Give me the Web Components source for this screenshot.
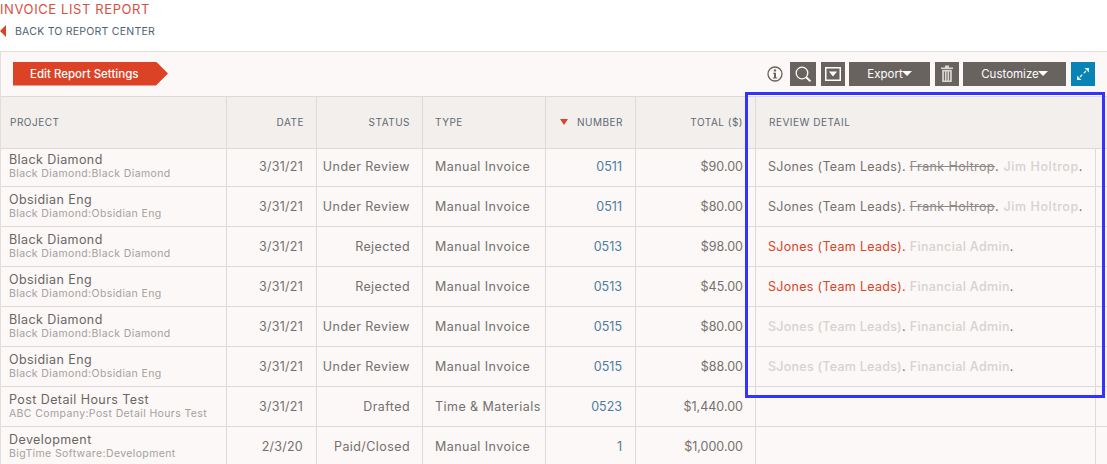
<!DOCTYPE html>
<html>
<head>
<meta charset="utf-8">
<title>Invoice List Report</title>
<style>
html,body{margin:0;padding:0;background:#fff;overflow:hidden;height:464px;}
body{font-family:"Inter","Liberation Sans",sans-serif;color:#6b6562;}
.grey{color:#d6d2d0;font-weight:500;letter-spacing:.35px}
</style>
</head>
<body>
<report-page>
  <report-heading title-text="Invoice List Report" back-text="Back to Report Center"></report-heading>
  <report-panel>
    <report-toolbar></report-toolbar>
    <report-row kind="head">
      <report-cell kind="head">PROJECT</report-cell>
      <report-cell kind="head" align="right">DATE</report-cell>
      <report-cell kind="head" align="right">STATUS</report-cell>
      <report-cell kind="head" style="padding-left:12px">TYPE</report-cell>
      <report-cell kind="head" align="right" sorted>NUMBER</report-cell>
      <report-cell kind="head" align="right">TOTAL ($)</report-cell>
      <report-cell kind="head" style="padding-left:13px">REVIEW DETAIL</report-cell>
    </report-row>
    <div id="rows"></div>
  </report-panel>
  <review-highlight></review-highlight>
</report-page>

<script>
const pageTemplate = document.createElement("template");
pageTemplate.innerHTML = `<style>
:host{display:block;position:relative;width:1107px;height:464px;overflow:hidden;}
</style><slot></slot>`;
class ReportPage extends HTMLElement {
  constructor() {
    super();
    this.attachShadow({ mode: "open" }).appendChild(pageTemplate.content.cloneNode(true));
  }
}
customElements.define("report-page", ReportPage);

const headingTemplate = document.createElement("template");
headingTemplate.innerHTML = `<style>
:host{display:block;height:51px;box-sizing:border-box;padding-top:1px;}
h1{margin:0;font-size:13px;line-height:16px;font-weight:400;letter-spacing:.6px;color:#d9503f;text-transform:uppercase;}
a{display:flex;align-items:center;margin-top:6px;height:16px;font-size:10.5px;letter-spacing:.24px;color:#4f6273;text-transform:uppercase;}
i{width:0;height:0;border-style:solid;border-width:6px 6px 6px 0;border-color:transparent #dc4326 transparent transparent;margin-right:9px;}
</style><h1></h1><a><i></i><span></span></a>`;
class ReportHeading extends HTMLElement {
  constructor() {
    super();
    this.$root = this.attachShadow({ mode: "open" });
    this.$root.appendChild(headingTemplate.content.cloneNode(true));
  }
  connectedCallback() {
    this.$root.querySelector("h1").textContent = this.getAttribute("title-text");
    this.$root.querySelector("span").textContent = this.getAttribute("back-text");
  }
}
customElements.define("report-heading", ReportHeading);

const panelTemplate = document.createElement("template");
panelTemplate.innerHTML = `<style>
:host{display:block;background:#fbf8f7;border-top:1px solid #e2dedc;border-left:1px solid #e2dedc;width:1107px;box-sizing:border-box;
  --cols:226px 90px 106px 123px 90px 120px 340px 11px;}
</style><slot></slot>`;
class ReportPanel extends HTMLElement {
  constructor() {
    super();
    this.attachShadow({ mode: "open" }).appendChild(panelTemplate.content.cloneNode(true));
  }
}
customElements.define("report-panel", ReportPanel);

const toolbarTemplate = document.createElement("template");
toolbarTemplate.innerHTML = `<style>
:host{display:flex;align-items:center;height:44px;box-sizing:border-box;padding:0 12px;}
.edit{display:flex;align-items:center;height:24px;width:155px;box-sizing:border-box;padding-left:17px;background:#dc4326;color:#fff;
  font-size:11.5px;font-weight:500;clip-path:polygon(0 0,143px 0,155px 50%,143px 100%,0 100%);margin-top:-1px;}
.tools{margin-left:auto;display:flex;align-items:center;margin-top:-1px;}
.btn{display:flex;align-items:center;justify-content:center;height:24px;box-sizing:border-box;background:#696360;color:#fff;font-size:11.5px;margin-left:5px;}
.btn svg{display:block;}
.info{display:block;}
.caret{width:0;height:0;border-style:solid;border-width:5px 5px 0 5px;border-color:#fff transparent transparent transparent;margin-left:-1px;}
.blue{background:#0783b5;}
</style>
<div class="edit">Edit Report Settings</div>
<div class="tools">
  <svg class="info" width="16" height="16" viewBox="0 0 16 16"><circle cx="8" cy="8" r="7" fill="none" stroke="#696360" stroke-width="1.3"/><circle cx="8" cy="4.4" r="1.2" fill="#696360"/><path d="M6 6.8h3v4.8h1.2v1H5.8v-1H7V7.8H6z" fill="#696360"/></svg>
  <div class="btn" style="width:26px;margin-left:7px"><svg width="18" height="18" viewBox="0 0 18 18"><circle cx="8" cy="8" r="5.8" fill="none" stroke="#fff" stroke-width="1.3"/><path d="M12 12l4.4 4.4" stroke="#fff" stroke-width="2"/></svg></div>
  <div class="btn" style="width:24px"><svg width="16" height="14" viewBox="0 0 16 14"><rect x=".75" y=".75" width="14.5" height="12.5" fill="none" stroke="#fff" stroke-width="1.5"/><path d="M4 4.5h8L8 9.5z" fill="#fff"/></svg></div>
  <div class="btn" style="width:81px;margin-left:4px">Export<span class="caret"></span></div>
  <div class="btn" style="width:24px"><svg width="12" height="17" viewBox="0 0 12 17"><path d="M0 2.5h12v1.4H0zM4 .5h4v2H4z" fill="#fff" fill-opacity=".75"/><path d="M1.2 4.8h9.6V17H1.2z" fill="#fff" fill-opacity=".75"/><path d="M3.4 6.5v9M6 6.5v9M8.6 6.5v9" stroke="#696360" stroke-width="1"/></svg></div>
  <div class="btn" style="width:103px;margin-left:4px">Customize<span class="caret"></span></div>
  <div class="btn blue" style="width:24px"><svg width="16" height="16" viewBox="0 0 16 16" fill="#dff1f8"><path d="M9.5 2H14v4.5z"/><path d="M6.5 14H2V9.5z"/><path d="M11 5L8.8 7.2M5 11l2.2-2.2" stroke="#dff1f8" stroke-width="1.3"/></svg></div>
</div>`;
class ReportToolbar extends HTMLElement {
  constructor() {
    super();
    this.attachShadow({ mode: "open" }).appendChild(toolbarTemplate.content.cloneNode(true));
  }
}
customElements.define("report-toolbar", ReportToolbar);

const rowTemplate = document.createElement("template");
rowTemplate.innerHTML = `<style>
:host{display:grid;grid-template-columns:var(--cols);height:40px;box-sizing:border-box;border-top:1px solid #dedad8;}
:host([kind=head]){height:52px;background:#f3efed;grid-template-columns:226px 90px 106px 123px 90px 120px 346px;}
:host([first]){height:38px;}
</style><slot></slot>`;
class ReportRow extends HTMLElement {
  constructor() {
    super();
    this.attachShadow({ mode: "open" }).appendChild(rowTemplate.content.cloneNode(true));
  }
}
customElements.define("report-row", ReportRow);

const cellTemplate = document.createElement("template");
cellTemplate.innerHTML = `<style>
:host{display:flex;flex-direction:column;justify-content:center;box-sizing:border-box;min-width:0;padding:0 4px 0 8px;border-right:1px solid #dedad8;
  font-size:12.5px;letter-spacing:.25px;color:#75706d;white-space:nowrap;text-align:left;}
:host(:last-child){border-right:0;}
:host([align=right]){text-align:right;padding:0 12px 0 4px;}
:host([kind=head]){font-size:10px;letter-spacing:.5px;color:#5f6a73;padding:0 12px 2px 9px;}
:host([kind=head][align=right]){padding:0 12px 2px 4px;}
.sort{display:none;width:0;height:0;border-style:solid;border-width:6px 4px 0 4px;border-color:#dc4326 transparent transparent transparent;margin-right:9px;vertical-align:1px;}
.sort.on{display:inline-block;}
</style><div><span class="sort"></span><slot></slot></div>`;
class ReportCell extends HTMLElement {
  constructor() {
    super();
    this.$root = this.attachShadow({ mode: "open" });
    this.$root.appendChild(cellTemplate.content.cloneNode(true));
  }
  connectedCallback() {
    this.$root.querySelector(".sort").classList.toggle("on", this.hasAttribute("sorted"));
  }
}
customElements.define("report-cell", ReportCell);

const highlightTemplate = document.createElement("template");
highlightTemplate.innerHTML = `<style>
:host{display:block;position:absolute;left:745px;top:92px;width:360px;height:306px;box-sizing:border-box;border:3px solid #3333ff;pointer-events:none;}
</style>`;
class ReviewHighlight extends HTMLElement {
  constructor() {
    super();
    this.attachShadow({ mode: "open" }).appendChild(highlightTemplate.content.cloneNode(true));
  }
}
customElements.define("review-highlight", ReviewHighlight);

const STRUCK = `SJones (Team Leads). <s style="color:#8f8986;letter-spacing:.38px">Frank Holtrop</s>. <span class="grey" style="letter-spacing:.55px;margin-left:1px">Jim Holtrop</span>.`;
const REJECT = `<span style="color:#dc4326">SJones (Team Leads).</span> <span class="grey">Financial Admin</span>.`;
const WAIT = `<span class="grey" style="letter-spacing:.25px">SJones (Team Leads)</span>. <span class="grey">Financial Admin</span>.`;
const DATA = [
  ["Black Diamond","Black Diamond:Black Diamond","3/31/21","Under Review","Manual Invoice","0511","$90.00",STRUCK],
  ["Obsidian Eng","Black Diamond:Obsidian Eng","3/31/21","Under Review","Manual Invoice","0511","$80.00",STRUCK],
  ["Black Diamond","Black Diamond:Black Diamond","3/31/21","Rejected","Manual Invoice","0513","$98.00",REJECT],
  ["Obsidian Eng","Black Diamond:Obsidian Eng","3/31/21","Rejected","Manual Invoice","0513","$45.00",REJECT],
  ["Black Diamond","Black Diamond:Black Diamond","3/31/21","Under Review","Manual Invoice","0515","$80.00",WAIT],
  ["Obsidian Eng","Black Diamond:Obsidian Eng","3/31/21","Under Review","Manual Invoice","0515","$88.00",WAIT],
  ["Post Detail Hours Test","ABC Company:Post Detail Hours Test","3/31/21","Drafted","Time &amp; Materials","0523","$1,440.00",""],
  ["Development","BigTime Software:Development","2/3/20","Paid/Closed","Manual Invoice","1","$1,000.00",""]
];
document.getElementById("rows").innerHTML = DATA.map((d, i) => {
  const up = i === 0 ? "padding-bottom:2px;" : "";
  return `
  <report-row ${i === 0 ? "first" : ""}>
    <report-cell style="${up}"><div style="line-height:14px;letter-spacing:.42px;color:#6b6562">${d[0]}</div><div style="font-size:10.5px;line-height:13px;letter-spacing:.38px;color:#a5a09d">${d[1]}</div></report-cell>
    <report-cell align="right" style="${up}padding-right:13px">${d[2]}</report-cell>
    <report-cell align="right" style="${up}padding-left:2px;letter-spacing:.42px">${d[3]}</report-cell>
    <report-cell style="${up}padding-left:12px;letter-spacing:.45px">${d[4]}</report-cell>
    <report-cell align="right" style="${up}letter-spacing:0;padding-right:13px"><span style="color:#4d7c9f">${d[5]}</span></report-cell>
    <report-cell align="right" style="${up}letter-spacing:0">${d[6]}</report-cell>
    <report-cell style="${up}padding-left:12px;letter-spacing:.3px">${d[7]}</report-cell>
    <report-cell></report-cell>
  </report-row>`;
}).join("");
</script>
</body>
</html>
